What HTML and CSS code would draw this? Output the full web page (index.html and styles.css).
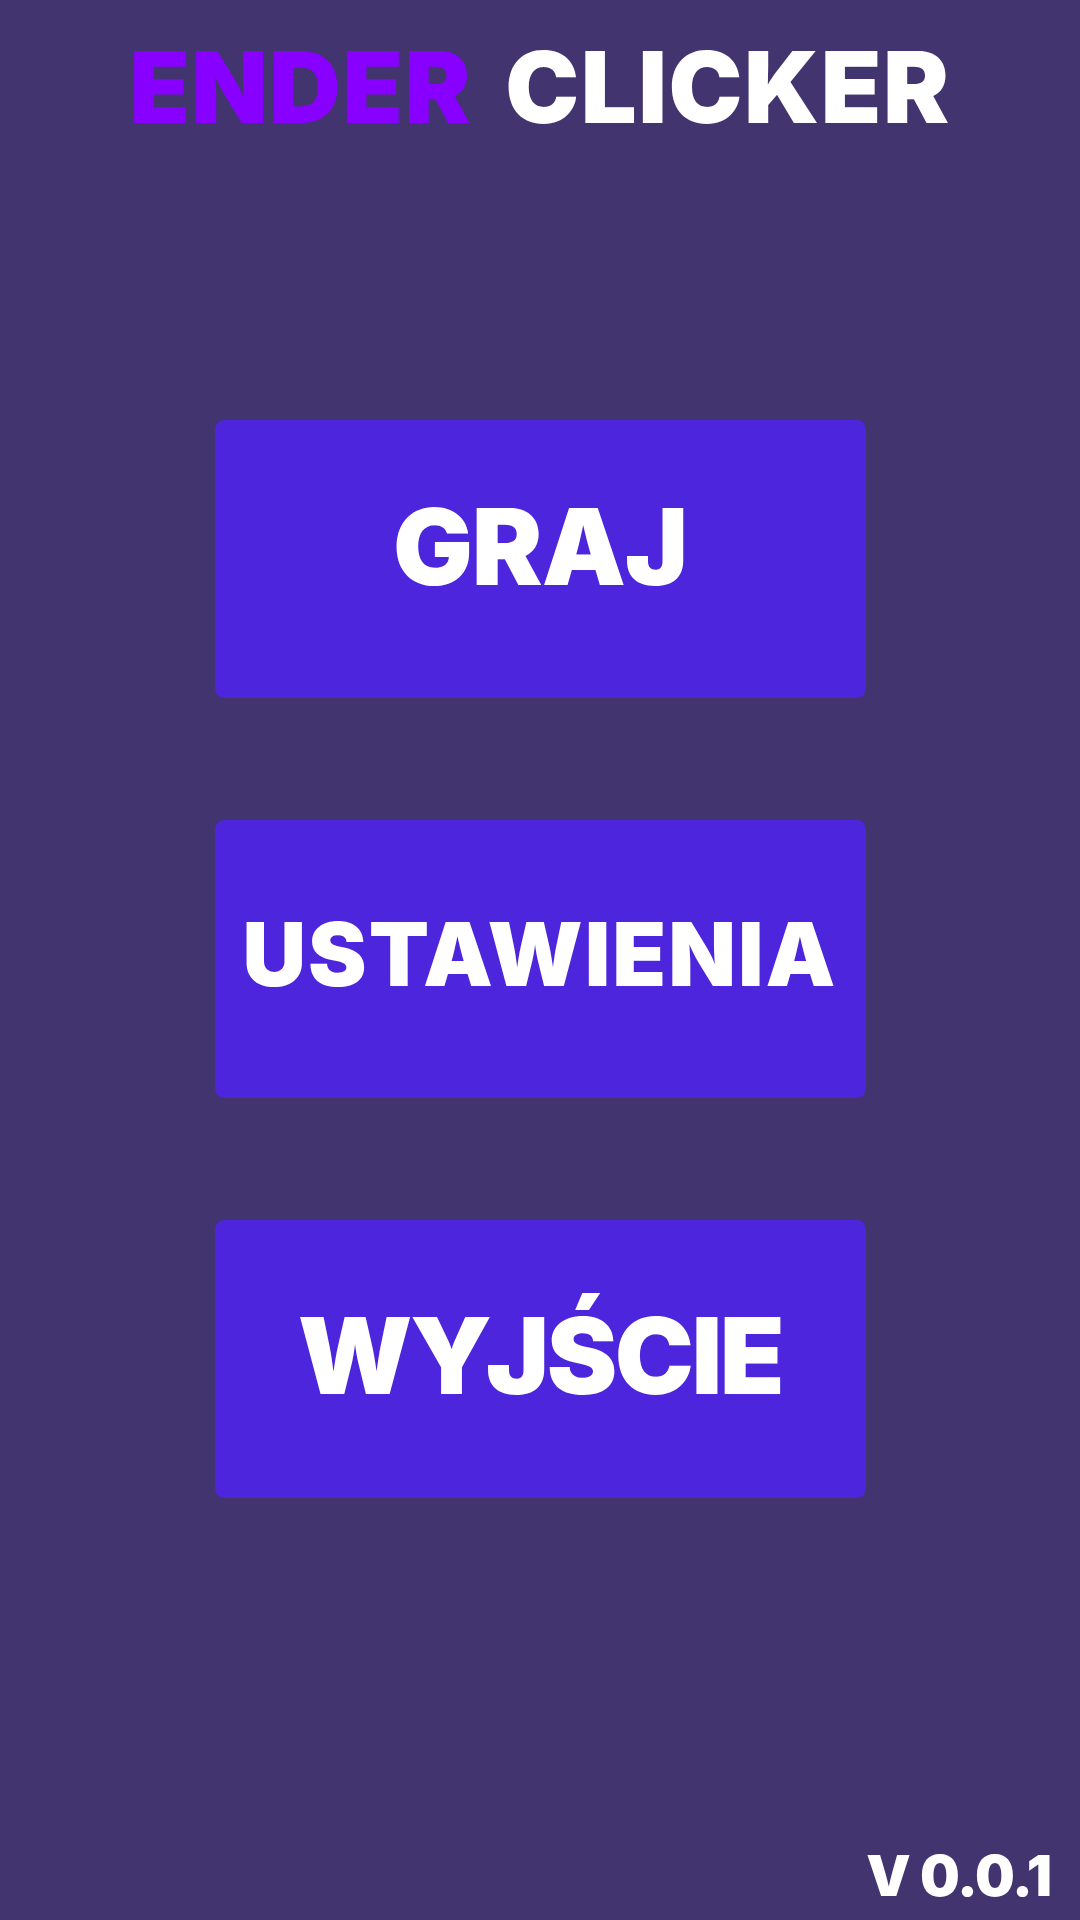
FILE: index.html
```html
<!DOCTYPE html>
<html lang="pl">
<head>
<meta charset="utf-8">
<title>Ender Clicker</title>
<link rel="stylesheet" href="styles.css">
</head>
<body>
<div class="screen">
  <h1 class="title"><span class="title-accent">ENDER</span> CLICKER</h1>
  <nav class="menu">
    <button class="menu-btn menu-btn--graj">GRAJ</button>
    <button class="menu-btn menu-btn--small">USTAWIENIA</button>
    <button class="menu-btn menu-btn--wyjscie">WYJŚCIE</button>
  </nav>
  <div class="version">V 0.0.1</div>
</div>
</body>
</html>
```
FILE: styles.css
```css
html, body {
  margin: 0;
  padding: 0;
}
body {
  background: #42346f;
  font-family: Inter, "Noto Sans", sans-serif;
  font-weight: 900;
  color: #ffffff;
}
.screen {
  width: 1080px;
  height: 1920px;
  display: flex;
  flex-direction: column;
  align-items: center;
  box-sizing: border-box;
}
.title {
  margin: 0;
  padding-top: 38px;
  font-size: 99px;
  line-height: 1;
  font-weight: 900;
  letter-spacing: 1.5px;
  word-spacing: 12px;
  white-space: nowrap;
}
.title-accent {
  color: #8800ff;
}
.menu {
  margin-top: 283px;
  display: flex;
  flex-direction: column;
  gap: 122px;
}
.menu-btn {
  width: 651px;
  height: 278px;
  border: 0;
  border-radius: 9px;
  background: #4c25dc;
  color: #ffffff;
  font-family: Inter, "Noto Sans", sans-serif;
  font-weight: 900;
  font-size: 106px;
  line-height: 1;
  letter-spacing: -1px;
  display: flex;
  align-items: center;
  justify-content: center;
  padding: 0;
}
.menu-btn--graj {
  padding-bottom: 24px;
}
.menu-btn--small {
  font-size: 88px;
  letter-spacing: 2px;
  padding-bottom: 10px;
}
.menu-btn--wyjscie {
  letter-spacing: -2.5px;
  padding-bottom: 6px;
}
.version {
  margin-top: auto;
  align-self: flex-end;
  margin-right: 29px;
  margin-bottom: 16px;
  font-size: 56px;
  line-height: 1;
  letter-spacing: -1px;
}
```
